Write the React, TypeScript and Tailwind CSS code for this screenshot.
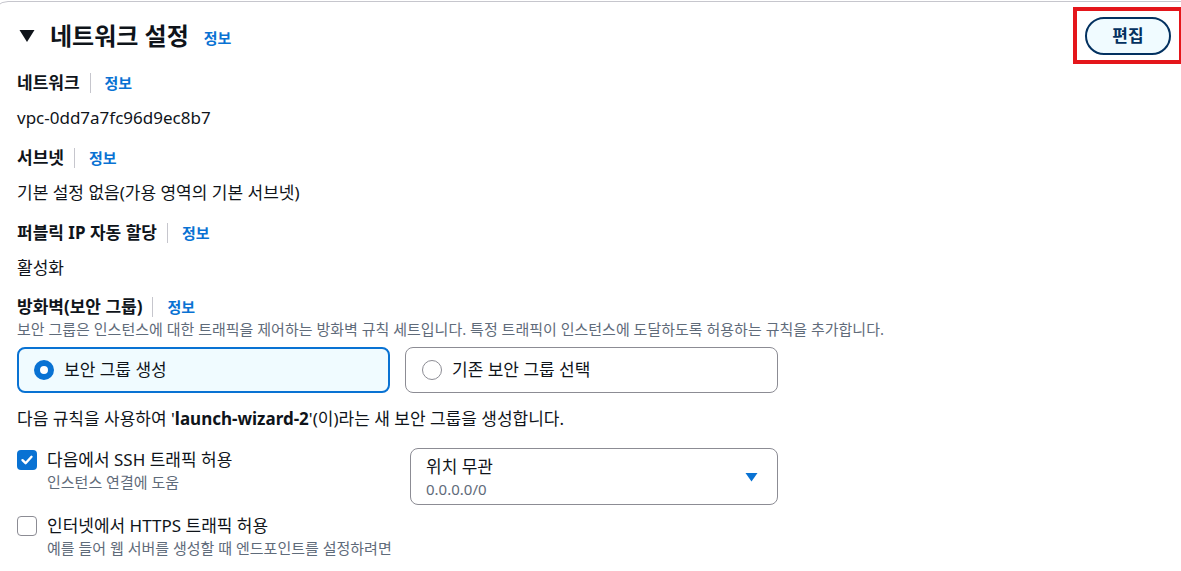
import React from 'react';

const font = { fontFamily: '"Noto Sans", "Noto Sans CJK KR", sans-serif' };

const Info = () => (
  <a className="text-[15px] font-bold text-[#0972d3] leading-[20px]">정보</a>
);

const FieldLabel = ({ children }: { children: React.ReactNode }) => (
  <div className="flex items-center h-[22px]">
    <span className="text-[17px] font-bold leading-[22px] text-[#0f141a]">{children}</span>
    <span className="ml-[10px] w-px h-[20px] bg-[#c6c6cd]" />
    <span className="ml-[14px] flex items-center"><Info /></span>
  </div>
);

const Field = ({ label, value }: { label: string; value: string }) => (
  <div>
    <FieldLabel>{label}</FieldLabel>
    <div className="mt-[12px] text-[17px] leading-[24px] text-[#0f141a]">{value}</div>
  </div>
);

const RadioCard = ({ label, selected }: { label: string; selected?: boolean }) => (
  <div
    className={
      selected
        ? 'flex items-center w-[373px] h-[46px] rounded-[8px] border-2 border-[#0972d3] bg-[#f0fbff] pl-[15px]'
        : 'flex items-center w-[373px] h-[46px] rounded-[8px] border border-[#8c8c94] bg-white pl-[15px]'
    }
  >
    {selected ? (
      <span className="block w-[20px] h-[20px] rounded-full border-[6px] border-[#0972d3] bg-white" />
    ) : (
      <span className="block ml-px w-[20px] h-[20px] rounded-full border-[1.5px] border-[#8c8c94] bg-white" />
    )}
    <span className="ml-[10px] text-[17px] leading-[24px] text-[#0f141a]">{label}</span>
  </div>
);

const Checkbox = ({ checked }: { checked?: boolean }) =>
  checked ? (
    <span className="flex items-center justify-center w-[20px] h-[20px] rounded-[4px] bg-[#0972d3]">
      <svg width="14" height="14" viewBox="0 0 14 14">
        <path d="M2.5 7.2 L5.6 10.2 L11.5 3.8" fill="none" stroke="white" strokeWidth="2.4" strokeLinecap="round" strokeLinejoin="round" />
      </svg>
    </span>
  ) : (
    <span className="block w-[20px] h-[20px] rounded-[4px] border-[1.5px] border-[#8c8c94] bg-white" />
  );

export default function App() {
  return (
    <div className="relative w-[1181px] h-[571px] overflow-hidden bg-white" style={font}>
      <div className="mt-px -ml-[8px] w-[1220px] h-[600px] rounded-2xl border border-[#c6c6cd] pl-[24px] pt-[15px] text-[#0f141a]">
        {/* header */}
        <div className="flex items-center justify-between h-[38px] w-[1154px]">
          <div className="flex items-center">
            <svg width="16" height="14" viewBox="0 0 16 14" className="ml-[2px]">
              <polygon points="0.5,1 15.5,1 8,13" fill="#0f141a" />
            </svg>
            <h2 className="ml-[15px] text-[24px] font-bold leading-[30px]">네트워크 설정</h2>
            <span className="ml-[15px] mt-[4px] flex"><Info /></span>
          </div>
          <button className="w-[86px] h-[38px] rounded-full border-2 border-[#033160] bg-[#f0fbff] text-[17px] font-bold text-[#033160]">
            편집
          </button>
        </div>

        <div className="mt-[17px] flex flex-col gap-[17px]">
          <Field label="네트워크" value="vpc-0dd7a7fc96d9ec8b7" />
          <Field label="서브넷" value="기본 설정 없음(가용 영역의 기본 서브넷)" />
          <Field label="퍼블릭 IP 자동 할당" value="활성화" />
        </div>

        <div className="mt-[16px]">
          <FieldLabel>방화벽(보안 그룹)</FieldLabel>
          <div className="mt-px text-[15px] leading-[20px] text-[#5f6b7a]">
            보안 그룹은 인스턴스에 대한 트래픽을 제어하는 방화벽 규칙 세트입니다. 특정 트래픽이 인스턴스에 도달하도록 허용하는 규칙을 추가합니다.
          </div>
          <div className="mt-[8px] flex gap-[15px]">
            <RadioCard label="보안 그룹 생성" selected />
            <RadioCard label="기존 보안 그룹 선택" />
          </div>
          <div className="mt-[14px] text-[17px] leading-[24px]">
            다음 규칙을 사용하여 '<b>launch-wizard-2</b>'(이)라는 새 보안 그룹을 생성합니다.
          </div>

          <div className="mt-[17px] flex">
            <div className="w-[393px] flex">
              <div className="pt-[2px]"><Checkbox checked /></div>
              <div className="ml-[10px]">
                <div className="text-[17px] leading-[24px]">다음에서 SSH 트래픽 허용</div>
                <div className="text-[15px] leading-[20px] text-[#5f6b7a]">인스턴스 연결에 도움</div>
              </div>
            </div>
            <div className="flex items-center justify-between w-[368px] h-[57px] rounded-[8px] border border-[#8c8c94] pl-[15px] pr-[19px]">
              <div>
                <div className="text-[17px] leading-[24px]">위치 무관</div>
                <div className="text-[15px] leading-[20px] text-[#5f6b7a]">0.0.0.0/0</div>
              </div>
              <svg width="13" height="10" viewBox="0 0 13 10">
                <polygon points="0.5,1 12.5,1 6.5,9.5" fill="#0972d3" />
              </svg>
            </div>
          </div>

          <div className="mt-[9px] flex">
            <div className="pt-[2px]"><Checkbox /></div>
            <div className="ml-[10px]">
              <div className="text-[17px] leading-[24px]">인터넷에서 HTTPS 트래픽 허용</div>
              <div className="text-[15px] leading-[20px] text-[#5f6b7a]">예를 들어 웹 서버를 생성할 때 엔드포인트를 설정하려면</div>
            </div>
          </div>
        </div>
      </div>

      {/* annotation highlight */}
      <div className="absolute left-[1073px] top-[7px] w-[110px] h-[57px] border-4 border-[#e4161b]" />
    </div>
  );
}
